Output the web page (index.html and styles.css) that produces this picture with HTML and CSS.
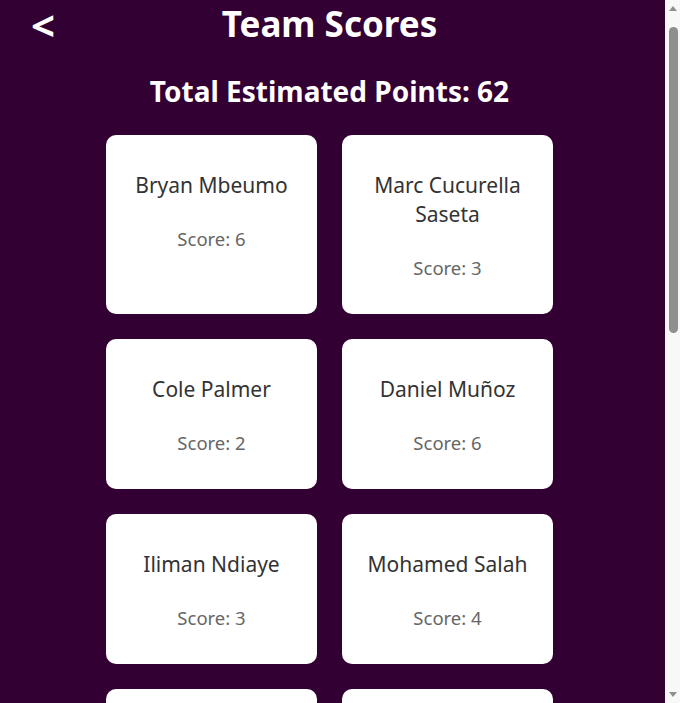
FILE: index.html
```html
<!DOCTYPE html>
<html lang="en">
<head>
<meta charset="utf-8">
<title>Team Scores</title>
<link rel="stylesheet" href="styles.css">
</head>
<body>
<main class="page">
  <header class="topbar">
    <a class="back" href="#" aria-label="Back">&lt;</a>
    <h1 class="title">Team Scores</h1>
    <span class="spacer"></span>
  </header>
  <h2 class="total">Total Estimated Points: 62</h2>
  <section class="grid">
    <div class="card"><div class="name">Bryan Mbeumo</div><div class="score">Score: 6</div></div>
    <div class="card"><div class="name">Marc Cucurella Saseta</div><div class="score">Score: 3</div></div>
    <div class="card"><div class="name">Cole Palmer</div><div class="score">Score: 2</div></div>
    <div class="card"><div class="name">Daniel Muñoz</div><div class="score">Score: 6</div></div>
    <div class="card"><div class="name">Iliman Ndiaye</div><div class="score">Score: 3</div></div>
    <div class="card"><div class="name">Mohamed Salah</div><div class="score">Score: 4</div></div>
    <div class="card"><div class="name">Erling Haaland</div><div class="score">Score: 12</div></div>
    <div class="card"><div class="name">Bukayo Saka</div><div class="score">Score: 8</div></div>
  </section>
</main>
<div class="scrollbar" aria-hidden="true">
  <span class="arrow-up"></span>
  <span class="thumb"></span>
  <span class="arrow-down"></span>
</div>
</body>
</html>
```

FILE: styles.css
```css
html, body {
  margin: 0;
  padding: 0;
  background: #330033;
}

body {
  font-family: "Noto Sans", "Open Sans", "DejaVu Sans", sans-serif;
  color: #ffffff;
}

.page {
  padding: 0 21px 40px 0;
}

.topbar {
  display: grid;
  grid-template-columns: 1fr auto 1fr;
  align-items: center;
}

.back {
  justify-self: start;
  margin: -4px 0 -5px 27px;
  padding: 0 4px;
  color: #ffffff;
  text-decoration: none;
  font-size: 42px;
  font-weight: 700;
  line-height: normal;
}

.title {
  margin: 0;
  font-size: 35px;
  font-weight: 700;
  line-height: 48px;
}

.total {
  margin: 24px 0 0;
  text-align: center;
  font-size: 28px;
  font-weight: 700;
  line-height: 38px;
}

.grid {
  display: grid;
  grid-template-columns: repeat(2, 211px);
  gap: 25px;
  justify-content: center;
  margin-top: 25px;
}

.card {
  background: #ffffff;
  border-radius: 10px;
  padding: 36px 12px 33px;
  text-align: center;
}

.name {
  font-size: 21px;
  line-height: 29px;
  color: #333333;
}

.score {
  margin-top: 26px;
  font-size: 18.5px;
  line-height: 26px;
  color: #666666;
}

.scrollbar {
  position: fixed;
  top: 0;
  right: 0;
  width: 15px;
  height: 100vh;
  background: #f8f8f8;
}

.thumb {
  position: absolute;
  top: 27px;
  left: 4px;
  width: 9px;
  height: 306px;
  border-radius: 5px;
  background: #8f8f8f;
}

.arrow-up,
.arrow-down {
  position: absolute;
  left: 4px;
  width: 0;
  height: 0;
  border-left: 4px solid transparent;
  border-right: 4px solid transparent;
}

.arrow-up {
  top: 6px;
  border-bottom: 5px solid #8f8f8f;
}

.arrow-down {
  bottom: 6px;
  border-top: 5px solid #8f8f8f;
}
```
